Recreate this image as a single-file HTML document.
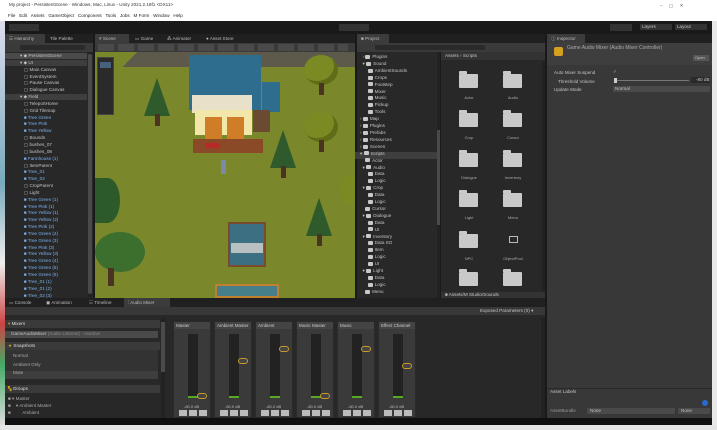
<!DOCTYPE html>
<html><head><meta charset="utf-8">
<style>
*{margin:0;padding:0;box-sizing:border-box}
body{width:717px;height:430px;overflow:hidden;background:#f0f0f0;font-family:"Liberation Sans",sans-serif;position:relative}
.a{position:absolute}
.t{position:absolute;font-size:4.6px;color:#c4c4c4;white-space:nowrap;line-height:6px}
.b{color:#7cb2f0}
.f{display:inline-block;width:5px;height:4px;background:#c8c8c8;margin-right:2px;vertical-align:middle;border-radius:1px}
.tab{position:absolute;height:9px;font-size:4.6px;color:#bbb;line-height:9px;padding-left:4px}
.strip{position:absolute;top:321px;width:38px;height:97px;background:#3a3a3a;border:1px solid #2a2a2a}
.strip .h{height:7px;background:#444;font-size:4.5px;color:#ccc;line-height:7px;padding-left:2px;white-space:nowrap;overflow:hidden}
.strip .m{position:absolute;left:14px;top:12px;width:10px;height:64px;background:#222}
.strip .g{position:absolute;left:14px;top:74px;width:10px;height:2px;background:#5a2}
.strip .k{position:absolute;left:23px;width:10px;height:6px;border:1px solid #c89a2a;border-radius:3px;background:#444}
.strip .v{position:absolute;left:10px;top:82px;font-size:4px;color:#bbb}
.strip .bt{position:absolute;top:88px;left:5px;width:28px;height:6px;background:repeating-linear-gradient(90deg,#bbb 0 8px,#3a3a3a 8px 10px)}
.folder{position:absolute;width:19px;height:14px;background:#c9c9c9;border-radius:1px}
.folder:before{content:"";position:absolute;left:0;top:-3px;width:8px;height:3px;background:#c9c9c9;border-radius:1px 1px 0 0}
.fl{position:absolute;font-size:4px;color:#aaa;width:30px;text-align:center}
.tree{position:absolute;width:34px;height:30px;border-radius:50%;background:#7b8a22;box-shadow:inset -4px -4px 0 #5f6c18}
.pine{position:absolute;width:0;height:0;border-left:13px solid transparent;border-right:13px solid transparent;border-bottom:38px solid #2e5a2c}
.trunk{position:absolute;width:5px;height:12px;background:#4a3320}
</style></head><body>
<div class="a" style="left:0;top:0;width:717px;height:21px;background:#fff"></div>
<div class="t" style="left:9px;top:2px;color:#333">My project - PersistentScene - Windows, Mac, Linux - Unity 2021.2.19f1 &lt;DX11&gt;</div>
<div class="t" style="left:8px;top:13px;color:#222">File&nbsp;&nbsp; Edit&nbsp;&nbsp; Assets&nbsp;&nbsp; GameObject&nbsp;&nbsp; Component&nbsp;&nbsp; Tools&nbsp;&nbsp; Jobs&nbsp;&nbsp; M Form&nbsp;&nbsp; Window&nbsp;&nbsp; Help</div>
<div class="t" style="left:660px;top:3px;color:#555">–&nbsp;&nbsp;&nbsp;&nbsp; ▢&nbsp;&nbsp;&nbsp;&nbsp; ✕</div>
<div class="a" style="left:0;top:21px;width:5px;height:404px;background:linear-gradient(#dde 0,#7ab 40%,#eee 60%,#c44 75%,#4a6 85%,#ddd)"></div>
<div class="a" style="left:712px;top:21px;width:5px;height:409px;background:#e8e8e8"></div>
<div class="a" style="left:5px;top:21px;width:707px;height:404px;background:#191919"></div>
<div class="a" style="left:9px;top:24px;width:30px;height:7px;background:#333"></div>
<div class="a" style="left:339px;top:24px;width:30px;height:7px;background:#333"></div>
<div class="a" style="left:610px;top:24px;width:22px;height:7px;background:#333"></div>
<div class="t" style="left:640px;top:24px;background:#333;width:32px;padding-left:2px">Layers</div>
<div class="t" style="left:675px;top:24px;background:#333;width:32px;padding-left:2px">Layout</div>
<!-- Hierarchy -->
<div class="a" style="left:5px;top:34px;width:88px;height:264px;background:#282828"></div>
<div class="a" style="left:5px;top:34px;width:88px;height:9px;background:#202020"></div>
<div class="tab" style="left:5px;top:34px;width:40px;background:#3c3c3c">☰ Hierarchy</div>
<div class="tab" style="left:46px;top:34px">Tile Palette</div>
<div class="a" style="left:5px;top:43px;width:88px;height:9px;background:#3a3a3a"></div>
<div class="a" style="left:20px;top:45px;width:65px;height:5px;background:#2a2a2a;border-radius:2px"></div>
<div class="a" style="left:5px;top:53px;width:82px;height:6px;background:#4a4a4a"></div>
<div class="a" style="left:5px;top:60px;width:82px;height:6px;background:#3e3e3e"></div>
<div class="a" style="left:5px;top:94px;width:82px;height:6px;background:#3e3e3e"></div>
<div class="a" style="left:88px;top:52px;width:4px;height:245px;background:#222"></div>
<div class="a" style="left:88px;top:54px;width:4px;height:240px;background:#4a4a4a;border-radius:2px"></div>
<div class="t" style="left:20px;top:53px;line-height:6.85px">
▾ ◆ PersistentScene<br>▾ ◆ UI<br>&nbsp;&nbsp;&nbsp;▢ Main Canvas<br>&nbsp;&nbsp;&nbsp;▢ EventSystem<br>&nbsp;&nbsp;&nbsp;▢ Pause Canvas<br>&nbsp;&nbsp;&nbsp;▢ Dialogue Canvas<br>▾ ◆ Field<br>&nbsp;&nbsp;&nbsp;▢ TeleportHome<br>&nbsp;&nbsp;&nbsp;▢ Grid Tilemap<br>
&nbsp;&nbsp;&nbsp;<span class="b">■ Tree Green</span><br>&nbsp;&nbsp;&nbsp;<span class="b">■ Tree Pink</span><br>&nbsp;&nbsp;&nbsp;<span class="b">■ Tree Yellow</span><br>&nbsp;&nbsp;&nbsp;▢ Bounds<br>&nbsp;&nbsp;&nbsp;▢ bushes_07<br>&nbsp;&nbsp;&nbsp;▢ bushes_08<br>&nbsp;&nbsp;&nbsp;<span class="b">■ Farmhouse (1)</span><br>&nbsp;&nbsp;&nbsp;▢ ItemParent<br>&nbsp;&nbsp;&nbsp;<span class="b">■ Tree_01</span><br>&nbsp;&nbsp;&nbsp;<span class="b">■ Tree_02</span><br>&nbsp;&nbsp;&nbsp;▢ CropParent<br>&nbsp;&nbsp;&nbsp;▢ Light<br>
&nbsp;&nbsp;&nbsp;<span class="b">■ Tree Green (1)</span><br>&nbsp;&nbsp;&nbsp;<span class="b">■ Tree Pink (1)</span><br>&nbsp;&nbsp;&nbsp;<span class="b">■ Tree Yellow (1)</span><br>&nbsp;&nbsp;&nbsp;<span class="b">■ Tree Yellow (2)</span><br>&nbsp;&nbsp;&nbsp;<span class="b">■ Tree Pink (2)</span><br>&nbsp;&nbsp;&nbsp;<span class="b">■ Tree Green (2)</span><br>&nbsp;&nbsp;&nbsp;<span class="b">■ Tree Green (3)</span><br>&nbsp;&nbsp;&nbsp;<span class="b">■ Tree Pink (3)</span><br>&nbsp;&nbsp;&nbsp;<span class="b">■ Tree Yellow (3)</span><br>&nbsp;&nbsp;&nbsp;<span class="b">■ Tree Green (4)</span><br>&nbsp;&nbsp;&nbsp;<span class="b">■ Tree Green (5)</span><br>&nbsp;&nbsp;&nbsp;<span class="b">■ Tree Green (6)</span><br>&nbsp;&nbsp;&nbsp;<span class="b">■ Tree_01 (1)</span><br>&nbsp;&nbsp;&nbsp;<span class="b">■ Tree_01 (2)</span><br>&nbsp;&nbsp;&nbsp;<span class="b">■ Tree_02 (3)</span></div>
<!-- Scene -->
<div class="a" style="left:95px;top:34px;width:260px;height:9px;background:#202020"></div>
<div class="tab" style="left:95px;top:34px;width:34px;background:#3c3c3c"># Scene</div>
<div class="tab" style="left:131px;top:34px">▭ Game</div>
<div class="tab" style="left:163px;top:34px">⁂ Animator</div>
<div class="tab" style="left:202px;top:34px">● Asset Store</div>
<div class="a" style="left:95px;top:43px;width:260px;height:9px;background:#3a3a3a"></div>
<div class="a" style="left:98px;top:44px;width:250px;height:7px;background:repeating-linear-gradient(90deg,#4a4a4a 0 16px,#3a3a3a 16px 20px)"></div>
<div class="a" style="left:95px;top:52px;width:260px;height:246px;background:#7a872b"></div>
<div class="a" style="left:140px;top:52px;width:215px;height:15px;background:#5d5a4c"></div>
<div class="a" style="left:118px;top:52px;width:24px;height:15px;background:linear-gradient(135deg,#7a872b 50%,#5d5a4c 50%)"></div>
<div class="a" style="left:97px;top:57px;width:17px;height:58px;background:#2a2a2a;border:1px solid #444"></div>
<div class="a" style="left:100px;top:62px;width:11px;height:6px;background:#46607e"></div>
<!-- house -->
<div class="a" style="left:189px;top:55px;width:72px;height:55px;background:#2f6d8e"></div>
<div class="a" style="left:262px;top:82px;width:18px;height:30px;background:#2f6d8e"></div>
<div class="a" style="left:192px;top:95px;width:60px;height:18px;background:#e8e0c8"></div>
<div class="a" style="left:195px;top:110px;width:57px;height:25px;background:#f2e7a8"></div>
<div class="a" style="left:205px;top:117px;width:17px;height:22px;background:#d07d28"></div>
<div class="a" style="left:227px;top:117px;width:17px;height:22px;background:#d07d28"></div>
<div class="a" style="left:193px;top:139px;width:70px;height:14px;background:#8a4a28"></div>
<div class="a" style="left:205px;top:143px;width:15px;height:5px;background:#b82a2a"></div>
<div class="a" style="left:253px;top:110px;width:17px;height:22px;background:#6a4a30"></div>
<div class="a" style="left:221px;top:160px;width:5px;height:14px;background:#7a8aa8"></div>
<!-- trees -->
<div class="pine" style="left:144px;top:78px"></div><div class="trunk" style="left:155px;top:114px"></div>
<div class="pine" style="left:270px;top:130px"></div><div class="trunk" style="left:281px;top:166px"></div>
<div class="pine" style="left:306px;top:198px"></div><div class="trunk" style="left:317px;top:234px"></div>
<div class="tree" style="left:304px;top:55px"></div><div class="trunk" style="left:319px;top:83px"></div>
<div class="tree" style="left:304px;top:112px"></div><div class="trunk" style="left:319px;top:140px"></div>
<div class="a" style="left:95px;top:178px;width:25px;height:45px;background:#2d5a2a;border-radius:0 50% 50% 0"></div>
<div class="a" style="left:95px;top:232px;width:50px;height:40px;background:#3c6e2e;border-radius:50%"></div>
<div class="trunk" style="left:108px;top:268px;height:18px;width:6px"></div>
<div class="a" style="left:340px;top:175px;width:15px;height:30px;background:#7b8a22;border-radius:50% 0 0 50%"></div>
<div class="a" style="left:228px;top:222px;width:38px;height:45px;background:#3d6f82;border:2px solid #7a4a2c"></div>
<div class="a" style="left:231px;top:243px;width:32px;height:10px;background:#b8c0c0"></div>
<div class="a" style="left:215px;top:284px;width:64px;height:14px;background:#467f8a;border:2px solid #c08030"></div>
<!-- Project -->
<div class="a" style="left:357px;top:34px;width:188px;height:264px;background:#282828"></div>
<div class="a" style="left:357px;top:34px;width:188px;height:9px;background:#202020"></div>
<div class="tab" style="left:357px;top:34px;width:32px;background:#3c3c3c">■ Project</div>
<div class="a" style="left:357px;top:43px;width:188px;height:9px;background:#3a3a3a"></div>
<div class="a" style="left:375px;top:45px;width:110px;height:5px;background:#2a2a2a;border-radius:2px"></div>
<div class="a" style="left:441px;top:52px;width:104px;height:8px;background:#333"></div>
<div class="t" style="left:445px;top:53px">Assets › Scripts</div>
<div class="a" style="left:440px;top:52px;width:1px;height:246px;background:#1a1a1a"></div>
<div class="a" style="left:355px;top:152px;width:83px;height:7px;background:#3e3e3e"></div>
<div class="t" style="left:360px;top:54px;line-height:6.9px">
&nbsp;&nbsp;› <span class="f"></span>Plugins<br>&nbsp;&nbsp;▾ <span class="f"></span>Sound<br>&nbsp;&nbsp;&nbsp;&nbsp;&nbsp;&nbsp;<span class="f"></span>AmbientSounds<br>&nbsp;&nbsp;&nbsp;&nbsp;&nbsp;&nbsp;<span class="f"></span>Crops<br>&nbsp;&nbsp;&nbsp;&nbsp;&nbsp;&nbsp;<span class="f"></span>Footstep<br>&nbsp;&nbsp;&nbsp;&nbsp;&nbsp;&nbsp;<span class="f"></span>Mixer<br>&nbsp;&nbsp;&nbsp;&nbsp;&nbsp;&nbsp;<span class="f"></span>Music<br>&nbsp;&nbsp;&nbsp;&nbsp;&nbsp;&nbsp;<span class="f"></span>Pickup<br>&nbsp;&nbsp;&nbsp;&nbsp;&nbsp;&nbsp;<span class="f"></span>Tools<br>
› <span class="f"></span>Map<br>› <span class="f"></span>Plugins<br>› <span class="f"></span>Prefabs<br>› <span class="f"></span>Resources<br>› <span class="f"></span>Scenes<br>▾ <span class="f"></span>Scripts<br>&nbsp;&nbsp;&nbsp;&nbsp;<span class="f"></span>Actor<br>&nbsp;&nbsp;▾ <span class="f"></span>Audio<br>&nbsp;&nbsp;&nbsp;&nbsp;&nbsp;&nbsp;<span class="f"></span>Data<br>&nbsp;&nbsp;&nbsp;&nbsp;&nbsp;&nbsp;<span class="f"></span>Logic<br>&nbsp;&nbsp;▾ <span class="f"></span>Crop<br>&nbsp;&nbsp;&nbsp;&nbsp;&nbsp;&nbsp;<span class="f"></span>Data<br>&nbsp;&nbsp;&nbsp;&nbsp;&nbsp;&nbsp;<span class="f"></span>Logic<br>&nbsp;&nbsp;&nbsp;&nbsp;<span class="f"></span>Cursor<br>&nbsp;&nbsp;▾ <span class="f"></span>Dialogue<br>&nbsp;&nbsp;&nbsp;&nbsp;&nbsp;&nbsp;<span class="f"></span>Data<br>&nbsp;&nbsp;&nbsp;&nbsp;&nbsp;&nbsp;<span class="f"></span>UI<br>&nbsp;&nbsp;▾ <span class="f"></span>Inventory<br>&nbsp;&nbsp;&nbsp;&nbsp;&nbsp;&nbsp;<span class="f"></span>Data SO<br>&nbsp;&nbsp;&nbsp;&nbsp;&nbsp;&nbsp;<span class="f"></span>Item<br>&nbsp;&nbsp;&nbsp;&nbsp;&nbsp;&nbsp;<span class="f"></span>Logic<br>&nbsp;&nbsp;&nbsp;&nbsp;&nbsp;&nbsp;<span class="f"></span>UI<br>&nbsp;&nbsp;▾ <span class="f"></span>Light<br>&nbsp;&nbsp;&nbsp;&nbsp;&nbsp;&nbsp;<span class="f"></span>Data<br>&nbsp;&nbsp;&nbsp;&nbsp;&nbsp;&nbsp;<span class="f"></span>Logic<br>&nbsp;&nbsp;&nbsp;&nbsp;<span class="f"></span>Menu</div>
<div class="a" style="left:437px;top:52px;width:3px;height:246px;background:#222"></div>
<div class="a" style="left:437px;top:130px;width:3px;height:95px;background:#4a4a4a"></div>
<div class="a" style="left:542px;top:62px;width:3px;height:230px;background:#222"></div>
<div class="folder" style="left:459px;top:74px"></div><div class="fl" style="left:454px;top:95px">Actor</div>
<div class="folder" style="left:503px;top:74px"></div><div class="fl" style="left:498px;top:95px">Audio</div>
<div class="folder" style="left:459px;top:113px"></div><div class="fl" style="left:454px;top:135px">Crop</div>
<div class="folder" style="left:503px;top:113px"></div><div class="fl" style="left:498px;top:135px">Cursor</div>
<div class="folder" style="left:459px;top:153px"></div><div class="fl" style="left:454px;top:175px">Dialogue</div>
<div class="folder" style="left:503px;top:153px"></div><div class="fl" style="left:498px;top:175px">Inventory</div>
<div class="folder" style="left:459px;top:193px"></div><div class="fl" style="left:454px;top:215px">Light</div>
<div class="folder" style="left:503px;top:193px"></div><div class="fl" style="left:498px;top:215px">Menu</div>
<div class="folder" style="left:459px;top:234px"></div><div class="fl" style="left:454px;top:256px">NPC</div>
<div class="a" style="left:509px;top:236px;width:9px;height:7px;border:1px solid #bbb"></div><div class="fl" style="left:498px;top:256px">ObjectPool</div>
<div class="folder" style="left:459px;top:272px"></div>
<div class="folder" style="left:503px;top:272px"></div>
<div class="a" style="left:441px;top:292px;width:104px;height:6px;background:#333"></div>
<div class="t" style="left:445px;top:292px">■ Assets/M Studio/Sounds</div>
<!-- Inspector -->
<div class="a" style="left:547px;top:34px;width:165px;height:384px;background:#383838"></div>
<div class="a" style="left:547px;top:34px;width:165px;height:9px;background:#202020"></div>
<div class="tab" style="left:547px;top:34px;width:38px;background:#3c3c3c">ⓘ Inspector</div>
<div class="a" style="left:547px;top:43px;width:165px;height:22px;background:#3e3e3e"></div>
<div class="a" style="left:554px;top:47px;width:9px;height:9px;background:#d4a020;border-radius:2px"></div>
<div class="t" style="left:567px;top:45px;color:#aaa;font-size:5px">Game Audio Mixer (Audio Mixer Controller)</div>
<div class="a" style="left:693px;top:55px;width:16px;height:6px;background:#555"></div>
<div class="t" style="left:695px;top:55px;font-size:4px">Open</div>
<div class="t" style="left:554px;top:69px;line-height:8.6px">Auto Mixer Suspend<br>&nbsp;&nbsp;&nbsp;Threshold Volume<br>Update Mode</div>
<div class="t" style="left:613px;top:69px">✓</div>
<div class="a" style="left:614px;top:80px;width:75px;height:1px;background:#777"></div>
<div class="a" style="left:614px;top:78px;width:3px;height:5px;background:#ccc"></div>
<div class="a" style="left:691px;top:77px;width:19px;height:6px;background:#2a2a2a"></div>
<div class="t" style="left:696px;top:77px">-80 dB</div>
<div class="a" style="left:613px;top:86px;width:97px;height:6px;background:#4a4a4a"></div>
<div class="t" style="left:615px;top:86px">Normal</div>
<div class="a" style="left:547px;top:388px;width:165px;height:1px;background:#2a2a2a"></div>
<div class="t" style="left:550px;top:389px">Asset Labels</div>
<div class="a" style="left:702px;top:400px;width:6px;height:6px;background:#2a6ad0;border-radius:50%"></div>
<div class="t" style="left:550px;top:408px;color:#999">AssetBundle</div>
<div class="a" style="left:587px;top:408px;width:88px;height:6px;background:#4a4a4a"></div>
<div class="t" style="left:590px;top:408px">None</div>
<div class="a" style="left:678px;top:408px;width:32px;height:6px;background:#4a4a4a"></div>
<div class="t" style="left:681px;top:408px">None</div>
<!-- Bottom panel -->
<div class="a" style="left:5px;top:298px;width:540px;height:120px;background:#282828"></div>
<div class="a" style="left:5px;top:298px;width:540px;height:9px;background:#202020"></div>
<div class="tab" style="left:5px;top:298px">▭ Console</div>
<div class="tab" style="left:42px;top:298px">▣ Animation</div>
<div class="tab" style="left:85px;top:298px">☷ Timeline</div>
<div class="tab" style="left:124px;top:298px;width:46px;background:#3c3c3c">⫶ Audio Mixer</div>
<div class="a" style="left:5px;top:307px;width:540px;height:8px;background:#383838"></div>
<div class="t" style="left:480px;top:308px">Exposed Parameters (0) ▾</div>
<div class="a" style="left:5px;top:320px;width:155px;height:8px;background:#3a3a3a"></div>
<div class="t" style="left:8px;top:321px;color:#ddd"><span style="color:#d4a020">▾</span> Mixers</div>
<div class="a" style="left:5px;top:331px;width:153px;height:7px;background:#4a4a4a"></div>
<div class="t" style="left:11px;top:331px">GameAudioMixer <span style="color:#888">(Audio Listener) - Inactive</span></div>
<div class="a" style="left:5px;top:342px;width:155px;height:8px;background:#3a3a3a"></div>
<div class="t" style="left:8px;top:343px;color:#ddd"><span style="color:#d4a020">★</span> Snapshots</div>
<div class="a" style="left:5px;top:350px;width:153px;height:25px;background:#333"></div>
<div class="a" style="left:5px;top:371px;width:153px;height:8px;background:#3e3e3e"></div>
<div class="t" style="left:13px;top:352px;line-height:8.5px;color:#aaa">Normal<br>Ambient Only<br>Mute</div>
<div class="a" style="left:5px;top:385px;width:155px;height:8px;background:#3a3a3a"></div>
<div class="t" style="left:8px;top:386px;color:#ddd"><span style="color:#d4a020">▚</span> Groups</div>
<div class="t" style="left:8px;top:395px;line-height:7px;color:#aaa">■ ▾ Master<br>■ &nbsp;&nbsp;&nbsp;▾ Ambient Master<br>■ &nbsp;&nbsp;&nbsp;&nbsp;&nbsp;&nbsp;&nbsp;&nbsp;Ambient</div>
<div class="a" style="left:161px;top:318px;width:4px;height:100px;background:#222"></div>
<div class="a" style="left:161px;top:322px;width:4px;height:50px;background:#4a4a4a"></div>
<div class="a" style="left:541px;top:318px;width:4px;height:100px;background:#222"></div>
<div class="strip" style="left:173px"><div class="h">Master</div><div class="m"></div><div class="g"></div><div class="k" style="top:71px"></div><div class="v">-80.0 dB</div><div class="bt"></div></div>
<div class="strip" style="left:214px"><div class="h">Ambient Master</div><div class="m"></div><div class="g"></div><div class="k" style="top:36px"></div><div class="v">-80.0 dB</div><div class="bt"></div></div>
<div class="strip" style="left:255px"><div class="h">Ambient</div><div class="m"></div><div class="g"></div><div class="k" style="top:24px"></div><div class="v">-80.0 dB</div><div class="bt"></div></div>
<div class="strip" style="left:296px"><div class="h">Music Master</div><div class="m"></div><div class="g"></div><div class="k" style="top:71px"></div><div class="v">-80.0 dB</div><div class="bt"></div></div>
<div class="strip" style="left:337px"><div class="h">Music</div><div class="m"></div><div class="g"></div><div class="k" style="top:24px"></div><div class="v">-80.0 dB</div><div class="bt"></div></div>
<div class="strip" style="left:378px"><div class="h">Effect Channel</div><div class="m"></div><div class="g"></div><div class="k" style="top:41px"></div><div class="v">-80.0 dB</div><div class="bt"></div></div>
<div class="a" style="left:5px;top:418px;width:707px;height:7px;background:#101010"></div>
<div class="a" style="left:0;top:425px;width:717px;height:5px;background:#e4e4e4"></div>
</body></html>
